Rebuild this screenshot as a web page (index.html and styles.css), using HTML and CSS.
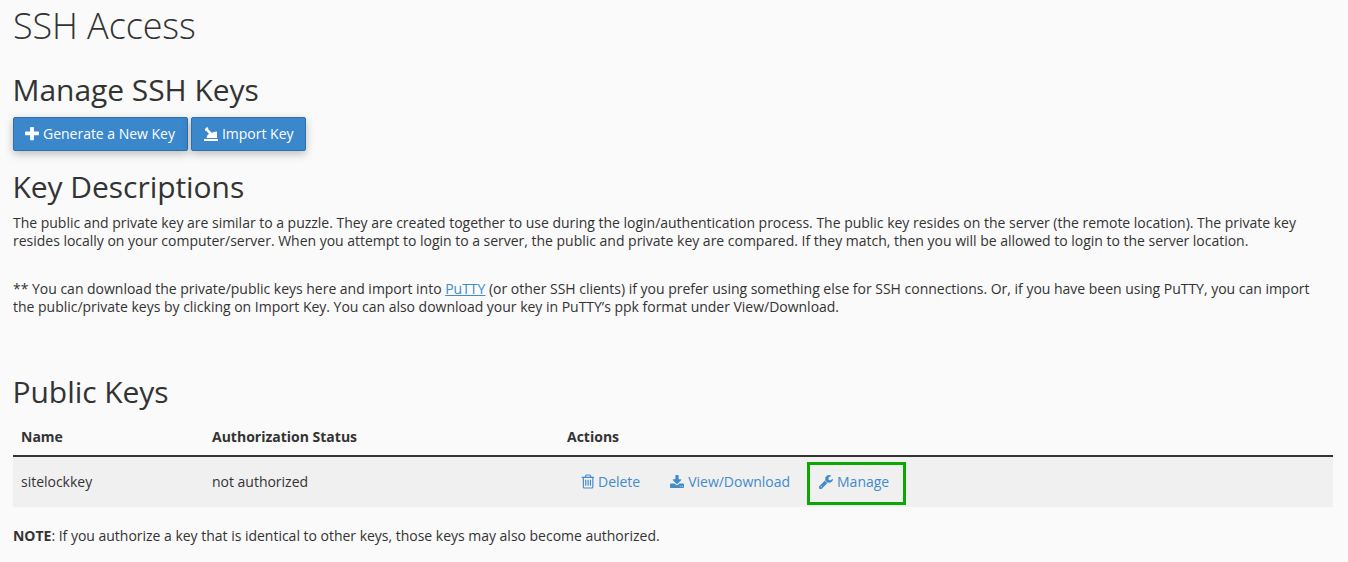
FILE: index.html
```html
<!DOCTYPE html>
<html lang="en">
<head>
    <meta charset="UTF-8">
    <title>SSH Access</title>
    <link rel="stylesheet" href="styles.css">
</head>
<body>
<div class="page">
    <h1>SSH Access</h1>
    <h2 class="manage-title">Manage SSH Keys</h2>
    <div class="buttons">
        <a class="btn" href="#">
            <svg width="14" height="14" viewBox="192 192 1408 1408"><path d="M1600 736v192q0 40-28 68t-68 28h-416v416q0 40-28 68t-68 28h-192q-40 0-68-28t-28-68v-416h-416q-40 0-68-28t-28-68v-192q0-40 28-68t68-28h416v-416q0-40 28-68t68-28h192q40 0 68 28t28 68v416h416q40 0 68 28t28 68z" fill="#fff"/></svg>
            Generate a New Key
        </a>
        <a class="btn btn-import" href="#">
            <svg width="14" height="14" viewBox="0 0 14 14"><path d="M0 12h14v2H0z M2.500 11L3.500 8L5 7L2 3.500L1 4L1 2L3 0L4.500 1L4 2L8 6L9.500 5L13 4.500L13 11z" fill="#fff"/></svg>
            Import Key
        </a>
    </div>
    <h2 class="desc-title">Key Descriptions</h2>
    <p class="first">The public and private key are similar to a puzzle. They are created together to use during the login/authentication process. The public key resides on the server (the remote location). The private key resides locally on your computer/server. When you attempt to login to a server, the public and private key are compared. If they match, then you will be allowed to login to the server location.</p>
    <p class="second">** You can download the private/public keys here and import into <a class="putty" href="#">PuTTY</a> (or other SSH clients) if you prefer using something else for SSH connections. Or, if you have been using PuTTY, you can import the public/private keys by clicking on Import Key. You can also download your key in PuTTY’s ppk format under View/Download.</p>
    <h2 class="keys-title">Public Keys</h2>
    <table>
        <thead>
            <tr>
                <th class="col-name">Name</th>
                <th class="col-status">Authorization Status</th>
                <th>Actions</th>
            </tr>
        </thead>
        <tbody>
            <tr>
                <td>sitelockkey</td>
                <td>not authorized</td>
                <td class="actions-cell">
                    <div class="actions">
                        <a class="action" href="#">
                            <svg width="13" height="15" viewBox="128 128 1408 1536"><path d="M704 736v576q0 14-9 23t-23 9h-64q-14 0-23-9t-9-23v-576q0-14 9-23t23-9h64q14 0 23 9t9 23zm256 0v576q0 14-9 23t-23 9h-64q-14 0-23-9t-9-23v-576q0-14 9-23t23-9h64q14 0 23 9t9 23zm256 0v576q0 14-9 23t-23 9h-64q-14 0-23-9t-9-23v-576q0-14 9-23t23-9h64q14 0 23 9t9 23zm128 724v-948h-896v948q0 22 7 40.500t14.500 27 10.500 8.500h832q3 0 10.500-8.500t14.500-27 7-40.500zm-672-1076h448l-48-117q-7-9-17-11h-317q-10 2-17 11zm928 32v64q0 14-9 23t-23 9h-96v948q0 83-47 143.500t-113 60.500h-832q-66 0-113-58.500t-47-141.500v-952h-96q-14 0-23-9t-9-23v-64q0-14 9-23t23-9h309l70-167q15-37 54-63t79-26h320q40 0 79 26t54 63l70 167h309q14 0 23 9t9 23z" fill="#428bca"/></svg>
                            Delete
                        </a>
                        <a class="action" href="#">
                            <svg width="14" height="14" viewBox="64 128 1664 1408"><path d="M1344 1344q0-26-19-45t-45-19-45 19-19 45 19 45 45 19 45-19 19-45zm256 0q0-26-19-45t-45-19-45 19-19 45 19 45 45 19 45-19 19-45zm128-224v320q0 40-28 68t-68 28h-1472q-40 0-68-28t-28-68v-320q0-40 28-68t68-28h465l135 136q58 56 136 56t136-56l136-136h464q40 0 68 28t28 68zm-325-569q17 41-14 70l-448 448q-18 19-45 19t-45-19l-448-448q-31-29-14-70 17-39 59-39h256v-448q0-26 19-45t45-19h256q26 0 45 19t19 45v448h256q42 0 59 39z" fill="#428bca"/></svg>
                            View/Download
                        </a>
                        <a class="action highlighted" href="#">
                            <svg width="14" height="14" viewBox="128 128 1600 1600"><path d="M448 1472q0-26-19-45t-45-19-45 19-19 45 19 45 45 19 45-19 19-45zm644-420l-682 682q-37 37-90 37-52 0-91-37l-106-108q-38-36-38-90 0-53 38-91l681-681q39 98 114.500 173.500t173.500 114.500zm634-435q0 39-23 106-47 134-164.500 217.500t-258.500 83.500q-185 0-316.500-131.500t-131.500-316.500 131.500-316.500 316.500-131.500q58 0 121.500 16.500t107.500 46.500q16 11 16 28t-16 28l-293 169v224l193 107q5-3 79-48.500t135.500-81 70.500-35.500q15 0 23.500 10t8.500 25z" fill="#428bca"/></svg>
                            Manage
                        </a>
                    </div>
                </td>
            </tr>
        </tbody>
    </table>
    <p class="note"><strong>NOTE</strong>: If you authorize a key that is identical to other keys, those keys may also become authorized.</p>
</div>
</body>
</html>
```

FILE: styles.css
```css
body{
    margin:0;
    padding:0;
    background:#fafafa;
    color:#333;
    font-family: "Open Sans", Arial, sans-serif;
    font-size:14px;
    line-height:18px;
    letter-spacing:-0.015px;
    overflow:hidden;
}

.page{
    padding:0 15px 0 13px;
}

h1{
    margin:0;
    font-size:36px;
    font-weight:300;
    line-height:52px;
    letter-spacing:-0.1px;
}

h2{
    margin:0 0 0 -0.5px;
    font-size:30px;
    font-weight:400;
    line-height:40px;
    letter-spacing:-0.05px;
}

.manage-title{
    margin-top:18px;
}

.buttons{
    display:flex;
    gap:3px;
    margin-top:7px;
}

.btn{
    display:flex;
    align-items:center;
    gap:4px;
    height:32px;
    padding:0 12px 0 11px;
    background:#3a87cc;
    border:1px solid #2f70ab;
    border-radius:2px;
    box-shadow:0 3px 8px rgba(0,0,0,.25);
    color:#fff;
    text-decoration:none;
}

.btn-import{
    padding-left:12px;
}

.desc-title{
    margin-top:16px;
}

p{
    margin:0;
}

.first{
    margin-top:7px;
}

.second{
    margin-top:30px;
}

.putty{
    color:#428bca;
}

.keys-title{
    margin-top:56px;
}

table{
    width:100%;
    margin-top:5px;
    border-collapse:collapse;
}

th{
    padding:11px 8px 9px;
    text-align:left;
    font-weight:700;
    letter-spacing:0;
    border-bottom:2px solid #333;
}

td{
    padding:4px 8px;
    background:#f0f0f0;
}

.col-name{
    width:175px;
}

.col-status{
    width:339px;
}

.actions-cell{
    padding:5px 8px 2px;
}

.actions{
    display:flex;
}

.action{
    display:flex;
    align-items:center;
    box-sizing:border-box;
    gap:4px;
    height:43px;
    padding:0 15px 4px;
    color:#428bca;
    text-decoration:none;
}

.action:first-child{
    padding-left:14px;
}

.highlighted{
    margin-left:2px;
    padding:0 14px 4px 9px;
    border:3px solid #0aa800;
}

.note{
    margin-top:20px;
}
```
